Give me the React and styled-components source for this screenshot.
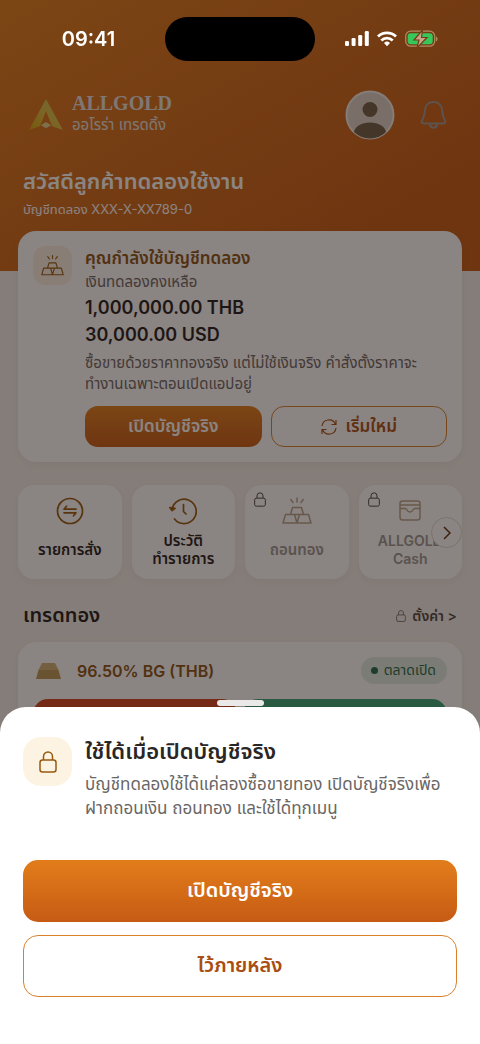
import styled, { createGlobalStyle } from "styled-components"

const GlobalStyle = createGlobalStyle`
* {
    box-sizing: border-box;
}
body {
    margin: 0;
    background-color: #f3f1ec;
    font-family: Inter, "Noto Sans Thai", "Noto Sans", sans-serif;
    color: #1f1b19;
}
button {
    font-family: inherit;
    cursor: pointer;
}
h1, h2, p {
    margin: 0;
}
svg {
    display: block;
    flex-shrink: 0;
}
`

const Screen = styled.div`
height: 100vh;
overflow: hidden;
`
const StatusBar = styled.div`
position: fixed;
top: 0;
left: 0;
right: 0;
z-index: 3;
display: grid;
grid-template-columns: 1fr 150px 1fr;
align-items: center;
padding-top: 17px;
`
const Time = styled.span`
padding-left: 12px;
text-align: center;
font-size: 20px;
font-weight: 600;
color: #fff;
`
const Island = styled.div`
height: 44px;
border-radius: 22px;
background-color: #000;
`
const StatusIcons = styled.div`
display: flex;
justify-content: center;
align-items: center;
gap: 8px;
padding-right: 12px;
`

const Header = styled.header`
height: 271px;
padding: 90px 23px 0;
background: linear-gradient(150deg, #e27d1b 0%, #c65b14 80%);
color: #fff;
`
const HeaderRow = styled.div`
display: flex;
align-items: center;
justify-content: space-between;
`
const Brand = styled.div`
display: flex;
align-items: center;
gap: 9px;
padding-left: 6px;
`
const BrandName = styled.div`
font-family: "Liberation Serif", serif;
font-size: 20px;
font-weight: 700;
line-height: 20px;
color: #e8e4e0;
`
const BrandSub = styled.div`
font-size: 15px;
line-height: 24px;
color: #e8e4e0;
`
const HeaderActions = styled.div`
display: flex;
align-items: center;
gap: 25px;
padding-right: 10px;
`
const IconButton = styled.button`
padding: 0;
border: 0;
background: none;
`
const Greeting = styled.h1`
margin-top: 25px;
font-size: 22px;
font-weight: 600;
line-height: 32px;
`
const Account = styled.p`
margin-top: 2px;
font-size: 13px;
line-height: 20px;
`

const Content = styled.main`
display: flex;
flex-direction: column;
margin-top: -40px;
padding: 0 18px;
`
const Card = styled.section`
padding: 15px;
border-radius: 18px;
background-color: #fff;
box-shadow: 0 3px 10px rgba(60, 40, 20, 0.05);
`
const DemoCard = styled(Card)`
display: flex;
align-items: flex-start;
gap: 13px;
`
const IconBox = styled.div`
display: flex;
align-items: center;
justify-content: center;
flex-shrink: 0;
width: ${(props) => props.$size}px;
height: ${(props) => props.$size}px;
border-radius: ${(props) => (props.$size > 40 ? 18 : 12)}px;
background-color: #fdf3e3;
`
const DemoBody = styled.div`
flex: 1;
`
const DemoTitle = styled.h2`
font-size: 17px;
font-weight: 600;
line-height: 24px;
color: #8a5212;
`
const DemoLabel = styled.p`
font-size: 15px;
line-height: 24px;
color: #6a6462;
`
const Amount = styled.p`
font-size: 18px;
font-weight: 600;
line-height: 27px;
`
const DemoText = styled.p`
margin-top: 4px;
font-size: 15px;
line-height: 21px;
color: #6a6462;
`
const DemoActions = styled.div`
display: flex;
gap: 9px;
margin-top: 12px;
`
const Button = styled.button`
display: flex;
align-items: center;
justify-content: center;
gap: 9px;
flex: 1;
height: 41px;
padding: 0;
border: 1px solid ${(props) => (props.$primary ? "transparent" : "#d9822b")};
border-radius: 13px;
background: ${(props) => (props.$primary ? "linear-gradient(#e27d1b, #c65b14) border-box" : "transparent")};
font-size: 17px;
font-weight: 600;
color: ${(props) => (props.$primary ? "#fff" : "#a94e10")};
`

const Menu = styled.nav`
position: relative;
display: grid;
grid-template-columns: repeat(4, 1fr);
gap: 10px;
margin-top: 23px;
`
const Tile = styled.button`
position: relative;
display: flex;
flex-direction: column;
align-items: center;
height: 94px;
padding: 12px 0 0;
border: 0;
border-radius: 16px;
background-color: #fff;
box-shadow: 0 3px 10px rgba(60, 40, 20, 0.05);
`
const TileIcon = styled.span`
display: flex;
align-items: center;
height: 28px;
`
const TileLabel = styled.span`
display: flex;
align-items: center;
height: 36px;
margin-top: 7px;
font-size: ${(props) => (props.$latin ? 14 : 15)}px;
font-weight: 600;
line-height: 18px;
white-space: pre-line;
color: ${(props) => (props.$locked ? "#9c9793" : "#1f1b19")};
`
const TileLock = styled.span`
position: absolute;
top: 7px;
left: 9px;
`
const NextButton = styled.button`
position: absolute;
top: 32px;
right: 0;
display: flex;
align-items: center;
justify-content: center;
width: 31px;
height: 31px;
padding: 0;
border: 1px solid #e0dbd5;
border-radius: 50%;
background-color: #fff;
`

const SectionRow = styled.div`
display: flex;
align-items: center;
justify-content: space-between;
margin: 22px 5px 11px;
height: 30px;
`
const SectionTitle = styled.h2`
font-size: 20px;
font-weight: 600;
`
const SettingsLink = styled.a`
display: flex;
align-items: center;
gap: 6px;
font-size: 14px;
font-weight: 600;
text-decoration: none;
color: #4a4543;
`
const MarketRow = styled.div`
display: flex;
align-items: center;
gap: 16px;
padding-left: 3px;
`
const MarketName = styled.h2`
flex: 1;
font-size: 16px;
font-weight: 600;
color: #8a5212;
`
const MarketStatus = styled.span`
display: flex;
align-items: center;
gap: 6px;
height: 27px;
padding: 0 11px 0 10px;
border-radius: 14px;
background-color: #dfeee6;
font-size: 14px;
color: #1d6b47;
&::before {
    content: "";
    width: 7px;
    height: 7px;
    border-radius: 50%;
    background-color: #1d6b47;
}
`
const PriceRow = styled.div`
display: flex;
gap: 6px;
margin-top: 15px;
`
const PriceBox = styled.div`
flex: 1;
height: 90px;
border-radius: 15px;
background-color: ${(props) => (props.$sell ? "#d3431f" : "#37a577")};
`

const Backdrop = styled.div`
position: fixed;
inset: 0;
z-index: 1;
background-color: rgba(30, 20, 15, 0.52);
`
const Sheet = styled.section`
position: fixed;
left: 0;
right: 0;
bottom: 0;
z-index: 2;
padding: 30px 23px 47px;
border-radius: 26px 26px 0 0;
background-color: #fff;
`
const Handle = styled.div`
position: absolute;
top: -7px;
left: 50%;
width: 47px;
height: 6px;
margin-left: -23px;
border-radius: 3px;
background-color: #ebe9e8;
`
const SheetInfo = styled.div`
display: flex;
gap: 13px;
margin-bottom: 40px;
`
const SheetTitle = styled.h2`
font-size: 22px;
font-weight: 600;
line-height: 28px;
color: #2a2625;
`
const SheetText = styled.p`
margin-top: 7px;
font-size: 17px;
line-height: 24px;
color: #6a6664;
`
const SheetActions = styled.div`
display: flex;
flex-direction: column;
gap: 13px;
`
const SheetButton = styled(Button)`
flex: none;
height: 62px;
border-radius: 15px;
font-size: 20px;
`

const LockIcon = ({ width, height, color, stroke = 1.5 }) => (
    <svg width={width} height={height} viewBox="0 0 18 22" fill="none" stroke={color} strokeWidth={stroke}>
        <rect x="1" y="9" width="16" height="12" rx="2.5" />
        <path d="M4.5 9V5.5a4.5 4.5 0 0 1 9 0V9" />
    </svg>
)

const GoldBarsIcon = ({ size, color }) => (
    <svg width={size} height={size} viewBox="0 0 30 30" fill="none" stroke={color} strokeWidth="1.5" strokeLinejoin="round" strokeLinecap="round">
        <path d="M8.5 18.500 10.500 11.500h9l2 7M1 27l2.500-8.500h23L29 27zM12.500 18.500 15 27l2.500-8.500M15 2v4M8.800 3.500 11 6.500M21.200 3.500 19 6.500" />
    </svg>
)

const LogoIcon = () => (
    <svg width="34" height="32" viewBox="0 0 36 34">
        <defs>
            <linearGradient id="logo" x1="0" y1="1" x2="1" y2="0">
                <stop offset="0" stopColor="#d9a50c" />
                <stop offset="0.5" stopColor="#e0c040" />
                <stop offset="1" stopColor="#c8c062" />
            </linearGradient>
        </defs>
        <path d="M18 0 36 33l-11.500-4L18 13 11.500 29 0 33z" fill="url(#logo)" />
        <path d="m18 24.500 5.500 3.500-5.500 3-5.500-3z" fill="#e6d58a" />
    </svg>
)

const SignalIcon = () => (
    <svg width="24" height="16" viewBox="0 0 24 16" fill="#fff">
        <rect x="0" y="10" width="4" height="5" rx="1.200" />
        <rect x="6.600" y="7" width="4" height="8" rx="1.200" />
        <rect x="13.200" y="4" width="4" height="11" rx="1.200" />
        <rect x="19.800" y="0" width="4" height="15" rx="1.200" />
    </svg>
)

const WifiIcon = () => (
    <svg width="20" height="16" viewBox="0 0 20 16" fill="none" stroke="#fff" strokeWidth="2.800">
        <path d="M1 5.400a13 13 0 0 1 18 0M4.300 9.400a8.200 8.200 0 0 1 11.400 0" />
        <path d="m10 15.200-3-3.200a4.300 4.300 0 0 1 6 0z" fill="#fff" stroke="none" />
    </svg>
)

const BatteryIcon = () => (
    <svg width="33" height="18" viewBox="0 0 33 18">
        <rect x="0.700" y="1.200" width="29" height="15" rx="5" fill="none" stroke="#b38a64" strokeWidth="1.200" />
        <path d="M31 6.500c2 .8 2 4.200 0 5z" fill="#b38a64" />
        <rect x="2.700" y="3.200" width="25" height="11" rx="3" fill="#35c759" />
        <path d="M17.500 0 9 10h5l-2 8L22 7.500h-5.500z" fill="#c9a58c" stroke="#733c10" strokeWidth="1.200" />
    </svg>
)

const AvatarIcon = () => (
    <svg width="50" height="50" viewBox="0 0 50 50">
        <defs>
            <clipPath id="avatar">
                <circle cx="25" cy="25" r="23.500" />
            </clipPath>
        </defs>
        <circle cx="25" cy="25" r="23.500" fill="#ddd2ca" stroke="#f4eeea" strokeWidth="2" />
        <g clipPath="url(#avatar)" fill="#705c48">
            <circle cx="25" cy="19.500" r="7.500" />
            <ellipse cx="25" cy="43" rx="16" ry="10.500" />
        </g>
    </svg>
)

const BellIcon = () => (
    <svg width="27" height="28" viewBox="0 0 26 28" fill="none" stroke="#a19a94" strokeWidth="2" strokeLinejoin="round">
        <path d="M13 1C7.500 1 4.500 5 4.300 10c-.1 4.500-1 6.500-2.800 9.500-.8 1.500 0 3 1.600 3h19.800c1.600 0 2.400-1.500 1.600-3-1.800-3-2.700-5-2.800-9.500C21.500 5 18.500 1 13 1z" />
        <path d="M9.200 23c.5 2.500 2 3.700 3.800 3.700s3.300-1.200 3.800-3.700" />
    </svg>
)

const RefreshIcon = () => (
    <svg width="16" height="16" viewBox="0 0 16 16" fill="none" stroke="#a94e10" strokeWidth="1.200">
        <path d="M1 7a7 7 0 0 1 13.300-2M15 1v4.500h-4.500M15 9A7 7 0 0 1 1.700 11M1 15v-4.500h4.500" />
    </svg>
)

const OrdersIcon = () => (
    <svg width="28" height="28" viewBox="0 0 28 28" fill="none" stroke="#96590f" strokeWidth="1.700" strokeLinecap="round" strokeLinejoin="round">
        <circle cx="14" cy="14" r="12.500" />
        <path d="M20 12.200H8l2.500-3M8 15.800h12l-2.500 3" />
    </svg>
)

const HistoryIcon = () => (
    <svg width="28" height="28" viewBox="0 0 28 28" fill="none" stroke="#96590f" strokeWidth="1.700" strokeLinecap="round" strokeLinejoin="round">
        <path d="M3 12.500A12.200 12.200 0 1 1 5.500 22" />
        <path d="M.8 10.500 3 13.500l3-2.200z" fill="#96590f" />
        <path d="M14.500 7.500v7l2.500 2.500" />
    </svg>
)

const WalletIcon = () => (
    <svg width="28" height="28" viewBox="0 0 28 28" fill="none" stroke="#b8a48c" strokeWidth="1.500" strokeLinejoin="round">
        <rect x="4" y="4" width="20" height="19" rx="2.500" />
        <path d="M4 8h20M4 11.500h5.500c1.500 0 1.200 3.500 4.500 3.500s3-3.500 4.500-3.500H24" />
    </svg>
)

const GoldBarIcon = () => (
    <svg width="25" height="16" viewBox="0 0 25 16">
        <path d="M6 0h13l3.500 7h-20z" fill="#d2b478" />
        <path d="M2.500 7h20L25 16H0z" fill="#bd9a54" />
    </svg>
)

const menuItems = [
    { label: "รายการสั่ง", icon: <OrdersIcon /> },
    { label: "ประวัติ\nทำรายการ", icon: <HistoryIcon /> },
    { label: "ถอนทอง", icon: <GoldBarsIcon size={30} color="#b8a48c" />, locked: true },
    { label: "ALLGOLD\nCash", icon: <WalletIcon />, locked: true, latin: true },
]

const App = () => {
    return (
        <Screen>
            <GlobalStyle />
            <StatusBar>
                <Time>09:41</Time>
                <Island />
                <StatusIcons>
                    <SignalIcon />
                    <WifiIcon />
                    <BatteryIcon />
                </StatusIcons>
            </StatusBar>
            <Header>
                <HeaderRow>
                    <Brand>
                        <LogoIcon />
                        <div>
                            <BrandName>ALLGOLD</BrandName>
                            <BrandSub>ออโรร่า เทรดดิ้ง</BrandSub>
                        </div>
                    </Brand>
                    <HeaderActions>
                        <IconButton aria-label="โปรไฟล์">
                            <AvatarIcon />
                        </IconButton>
                        <IconButton aria-label="แจ้งเตือน">
                            <BellIcon />
                        </IconButton>
                    </HeaderActions>
                </HeaderRow>
                <Greeting>สวัสดีลูกค้าทดลองใช้งาน</Greeting>
                <Account>บัญชีทดลอง XXX-X-XX789-0</Account>
            </Header>
            <Content>
                <DemoCard>
                    <IconBox $size={39}>
                        <GoldBarsIcon size={23} color="#96590f" />
                    </IconBox>
                    <DemoBody>
                        <DemoTitle>คุณกำลังใช้บัญชีทดลอง</DemoTitle>
                        <DemoLabel>เงินทดลองคงเหลือ</DemoLabel>
                        <Amount>1,000,000.00 THB</Amount>
                        <Amount>30,000.00 USD</Amount>
                        <DemoText>ซื้อขายด้วยราคาทองจริง แต่ไม่ใช้เงินจริง คำสั่งตั้งราคาจะทำงานเฉพาะตอนเปิดแอปอยู่</DemoText>
                        <DemoActions>
                            <Button $primary>เปิดบัญชีจริง</Button>
                            <Button>
                                <RefreshIcon />
                                เริ่มใหม่
                            </Button>
                        </DemoActions>
                    </DemoBody>
                </DemoCard>
                <Menu>
                    {menuItems.map((item) => (
                        <Tile key={item.label}>
                            {item.locked && (
                                <TileLock>
                                    <LockIcon width={12} height={15} color="#4a4543" />
                                </TileLock>
                            )}
                            <TileIcon>{item.icon}</TileIcon>
                            <TileLabel $locked={item.locked} $latin={item.latin}>{item.label}</TileLabel>
                        </Tile>
                    ))}
                    <NextButton aria-label="ถัดไป">
                        <svg width="8" height="14" viewBox="0 0 8 14" fill="none" stroke="#5a2f10" strokeWidth="1.500">
                            <path d="m1 1 6 6-6 6" />
                        </svg>
                    </NextButton>
                </Menu>
                <SectionRow>
                    <SectionTitle>เทรดทอง</SectionTitle>
                    <SettingsLink href="#settings">
                        <LockIcon width={10} height={12} color="#6a6462" />
                        ตั้งค่า &gt;
                    </SettingsLink>
                </SectionRow>
                <Card>
                    <MarketRow>
                        <GoldBarIcon />
                        <MarketName>96.50% BG (THB)</MarketName>
                        <MarketStatus>ตลาดเปิด</MarketStatus>
                    </MarketRow>
                    <PriceRow>
                        <PriceBox $sell />
                        <PriceBox />
                    </PriceRow>
                </Card>
            </Content>
            <Backdrop />
            <Sheet role="dialog" aria-labelledby="sheet-title">
                <Handle />
                <SheetInfo>
                    <IconBox $size={49}>
                        <LockIcon width={18} height={22} color="#96590f" />
                    </IconBox>
                    <div>
                        <SheetTitle id="sheet-title">ใช้ได้เมื่อเปิดบัญชีจริง</SheetTitle>
                        <SheetText>บัญชีทดลองใช้ได้แค่ลองซื้อขายทอง เปิดบัญชีจริงเพื่อฝากถอนเงิน ถอนทอง และใช้ได้ทุกเมนู</SheetText>
                    </div>
                </SheetInfo>
                <SheetActions>
                    <SheetButton $primary>เปิดบัญชีจริง</SheetButton>
                    <SheetButton>ไว้ภายหลัง</SheetButton>
                </SheetActions>
            </Sheet>
        </Screen>
    )
}

export default App
